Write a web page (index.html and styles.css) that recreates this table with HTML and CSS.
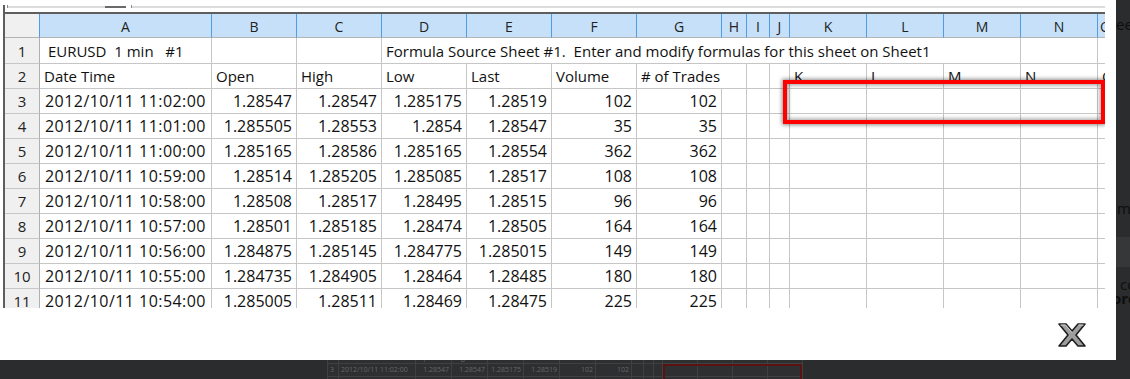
FILE: index.html
```html
<!DOCTYPE html>
<html>
<head>
<meta charset="utf-8">
<link rel="stylesheet" href="styles.css">
</head>
<body>
<div class="top">
  <div class="lightbox">
    <div class="shot">
      <div class="toolbar"><span class="tk"></span><span class="ln w1"></span><span class="dk"></span><span class="gap"></span><span class="tk"></span><span class="ln fill"></span></div>
      <div class="sheet">
        <i class="corner"></i><i class="ch">A</i><i class="ch">B</i><i class="ch">C</i><i class="ch">D</i><i class="ch">E</i><i class="ch">F</i><i class="ch">G</i><i class="ch">H</i><i class="ch">I</i><i class="ch">J</i><i class="ch">K</i><i class="ch">L</i><i class="ch">M</i><i class="ch">N</i><i class="ch">O</i>

        <i class="rh r1">1</i><i class="r1"> EURUSD  1 min   #1</i><i class="r1"></i><i class="r1"></i><i class="r1 span10">Formula Source Sheet #1.  Enter and modify formulas for this sheet on Sheet1</i><i class="r1"></i><i class="r1"></i>

        <i class="rh">2</i><i>Date Time</i><i>Open</i><i>High</i><i>Low</i><i>Last</i><i>Volume</i><i class="span2"># of Trades</i><i></i><i></i><i>K</i><i>L</i><i>M</i><i>N</i><i>O</i>

        <i class="rh">3</i><i class="d">2012/10/11 11:02:00</i><i class="n">1.28547</i><i class="n">1.28547</i><i class="n">1.285175</i><i class="n">1.28519</i><i class="n">102</i><i class="n">102</i><i></i><i></i><i></i><i></i><i></i><i></i><i></i><i></i>

        <i class="rh">4</i><i class="d">2012/10/11 11:01:00</i><i class="n">1.285505</i><i class="n">1.28553</i><i class="n">1.2854</i><i class="n">1.28547</i><i class="n">35</i><i class="n">35</i><i></i><i></i><i></i><i></i><i></i><i></i><i></i><i></i>

        <i class="rh">5</i><i class="d">2012/10/11 11:00:00</i><i class="n">1.285165</i><i class="n">1.28586</i><i class="n">1.285165</i><i class="n">1.28554</i><i class="n">362</i><i class="n">362</i><i></i><i></i><i></i><i></i><i></i><i></i><i></i><i></i>

        <i class="rh">6</i><i class="d">2012/10/11 10:59:00</i><i class="n">1.28514</i><i class="n">1.285205</i><i class="n">1.285085</i><i class="n">1.28517</i><i class="n">108</i><i class="n">108</i><i></i><i></i><i></i><i></i><i></i><i></i><i></i><i></i>

        <i class="rh">7</i><i class="d">2012/10/11 10:58:00</i><i class="n">1.28508</i><i class="n">1.28517</i><i class="n">1.28495</i><i class="n">1.28515</i><i class="n">96</i><i class="n">96</i><i></i><i></i><i></i><i></i><i></i><i></i><i></i><i></i>

        <i class="rh">8</i><i class="d">2012/10/11 10:57:00</i><i class="n">1.28501</i><i class="n">1.285185</i><i class="n">1.28474</i><i class="n">1.28505</i><i class="n">164</i><i class="n">164</i><i></i><i></i><i></i><i></i><i></i><i></i><i></i><i></i>

        <i class="rh">9</i><i class="d">2012/10/11 10:56:00</i><i class="n">1.284875</i><i class="n">1.285145</i><i class="n">1.284775</i><i class="n">1.285015</i><i class="n">149</i><i class="n">149</i><i></i><i></i><i></i><i></i><i></i><i></i><i></i><i></i>

        <i class="rh">10</i><i class="d">2012/10/11 10:55:00</i><i class="n">1.284735</i><i class="n">1.284905</i><i class="n">1.28464</i><i class="n">1.28485</i><i class="n">180</i><i class="n">180</i><i></i><i></i><i></i><i></i><i></i><i></i><i></i><i></i>

        <i class="rh">11</i><i class="d">2012/10/11 10:54:00</i><i class="n">1.285005</i><i class="n">1.28511</i><i class="n">1.28469</i><i class="n">1.28475</i><i class="n">225</i><i class="n">225</i><i></i><i></i><i></i><i></i><i></i><i></i><i></i><i></i>
      </div>
      <div class="sel"></div>
    </div>
    <div class="close-row">
      <svg class="close" width="28" height="24" viewBox="0 0 28 24">
        <polygon points="1,1 8,1 14,8 20,1 27,1 18,12 27,23 20,23 14,16 8,23 1,23 10,12" fill="#9d9d9d" stroke="#1e1e1e" stroke-width="1.6" stroke-linejoin="round"/>
        <polyline points="2.5,2 7.5,2 14,9.5" fill="none" stroke="#d8d8d8" stroke-width="1"/>
        <polyline points="20.5,2 25.5,2" fill="none" stroke="#d8d8d8" stroke-width="1"/>
      </svg>
    </div>
  </div>
  <div class="side">
    <div class="s1">ee</div>
    <div class="s2">m</div>
    <div class="band"></div>
    <div class="s3">co</div>
    <div class="s4">ore</div>
  </div>
</div>
<div class="below">
  <div class="mini">
    <i class="m2">2</i><i class="m2">Date Time</i><i class="m2">Open</i><i class="m2">High</i><i class="m2">Low</i><i class="m2">Last</i><i class="m2">Volume</i><i class="m2"># of Trades</i><i class="m2"></i><i class="m2"></i><i class="m2"></i><i class="m2">K</i><i class="m2">L</i><i class="m2">M</i><i class="m2">N</i>
    <i>3</i><i>2012/10/11 11:02:00</i><i class="n">1.28547</i><i class="n">1.28547</i><i class="n">1.285175</i><i class="n">1.28519</i><i class="n">102</i><i class="n">102</i><i></i><i></i><i></i><i></i><i></i><i></i><i></i>
    <i></i><i></i><i></i><i></i><i></i><i></i><i></i><i></i><i></i><i></i><i></i><i></i><i></i><i></i><i></i>
    <div class="msel"></div>
  </div>
</div>
</body>
</html>
```
FILE: styles.css
```css
html, body {
  margin: 0;
  padding: 0;
}
body {
  width: 1130px;
  height: 379px;
  overflow: hidden;
  background: #2a2c2d;
  font-family: "Open Sans", Lato, "Liberation Sans", sans-serif;
}
i {
  font-style: normal;
}
.top {
  display: flex;
  height: 360px;
}
.lightbox {
  width: 1116px;
  height: 360px;
  flex: none;
  background: #fff;
  display: flex;
  flex-direction: column;
}
.shot {
  position: relative;
  margin: 5px 0 0 3px;
  width: 1102px;
  height: 303px;
  flex: none;
  box-sizing: border-box;
  border-left: 2px solid #5e5e5e;
  overflow: hidden;
}
.toolbar {
  height: 7px;
  display: flex;
  align-items: flex-start;
}
.toolbar .tk {
  width: 1px;
  height: 3px;
  background: #8a8a8a;
}
.toolbar .tk:first-child {
  margin-left: 2px;
}
.toolbar .ln {
  margin-top: 1px;
  height: 2px;
  background: #dcdcdc;
}
.toolbar .w1 {
  width: 97px;
}
.toolbar .fill {
  flex: 1;
}
.toolbar .dk {
  margin-top: 1px;
  width: 21px;
  height: 2px;
  background: #6a6a6a;
}
.toolbar .gap {
  width: 5px;
}
.sheet {
  display: grid;
  grid-template-columns: 35px 172px repeat(6, 85px) 25px 23px 20px repeat(4, 77px) 16px;
  grid-template-rows: 24px 26px repeat(10, 25px);
  width: max-content;
  border-top: 2px solid #5e5e5e;
}
.sheet > i {
  box-sizing: border-box;
  border-right: 1px solid #c6c6c6;
  border-bottom: 1px solid #c6c6c6;
  padding: 0 4px 0 4px;
  font-size: 15px;
  line-height: 24px;
  color: #111;
  white-space: pre;
  overflow: visible;
}
.sheet > .ch {
  background: #c6e0fa;
  border-right-color: #4f9de8;
  border-bottom-color: #b4b4b4;
  text-align: center;
  font-size: 14px;
  line-height: 25px;
  color: #222;
  padding: 0;
}
.sheet > .corner {
  background: #f0f0f0;
  border-right-color: #4f9de8;
  border-bottom-color: #b4b4b4;
}
.sheet > .rh {
  background: #f0f0f0;
  text-align: center;
  padding: 0;
  border-right-color: #b0b0b0;
  color: #222;
}
.sheet > .r1 {
  line-height: 26px;
}
.sheet > .d {
  font-size: 16px;
  letter-spacing: 0.45px;
  padding-left: 5px;
}
.sheet > .n {
  font-size: 16px;
  text-align: right;
  padding-right: 4px;
}
.sheet > .span10 {
  grid-column: span 10;
}
.sheet > .span2 {
  grid-column: span 2;
}
.sel {
  position: absolute;
  left: 778px;
  top: 75px;
  width: 322px;
  height: 44px;
  box-sizing: border-box;
  border: 4px solid #ff0000;
  box-shadow: 0 0 4px 1px rgba(0, 0, 0, 0.45), inset 0 0 4px 1px rgba(0, 0, 0, 0.4);
}
.close-row {
  flex: 1;
  display: flex;
  justify-content: flex-end;
  align-items: flex-start;
  padding: 15px 30px 0 0;
}
.close {
  display: block;
}
.side {
  flex: 1;
  overflow: hidden;
  display: flex;
  flex-direction: column;
  font-size: 15px;
  color: #0e0e0e;
  white-space: nowrap;
}
.side .s1 {
  margin-top: 17px;
  line-height: 15px;
}
.side .s2 {
  margin-top: 169px;
  line-height: 15px;
  padding-left: 1px;
}
.side .band {
  margin-top: 21px;
  height: 30px;
  background: #353738;
}
.side .s3 {
  margin-top: 10px;
  line-height: 14px;
  padding-left: 4px;
}
.side .s4 {
  line-height: 14px;
  font-weight: bold;
  margin-left: -4px;
}
.below {
  height: 19px;
  padding-left: 327px;
  overflow: hidden;
}
.mini {
  position: relative;
  display: grid;
  grid-template-columns: 11px 77px repeat(6, 36px) 12px 10px 9px repeat(4, 35px);
  grid-template-rows: 4px 13px 4px;
  width: max-content;
  border-left: 1px solid #3e4041;
  font-size: 7px;
  color: #666869;
  background: #2d2f30;
}
.mini > i {
  box-sizing: border-box;
  border-right: 1px solid #3e4041;
  border-bottom: 1px solid #3e4041;
  padding: 0 2px;
  line-height: 12px;
  white-space: nowrap;
  overflow: hidden;
}
.mini > .m2 {
  display: flex;
  align-items: flex-end;
  line-height: 11px;
}
.mini > .n {
  text-align: right;
}
.msel {
  position: absolute;
  left: 335px;
  top: 4px;
  width: 139px;
  height: 20px;
  box-sizing: border-box;
  border: 2px solid #5a1212;
}
```
